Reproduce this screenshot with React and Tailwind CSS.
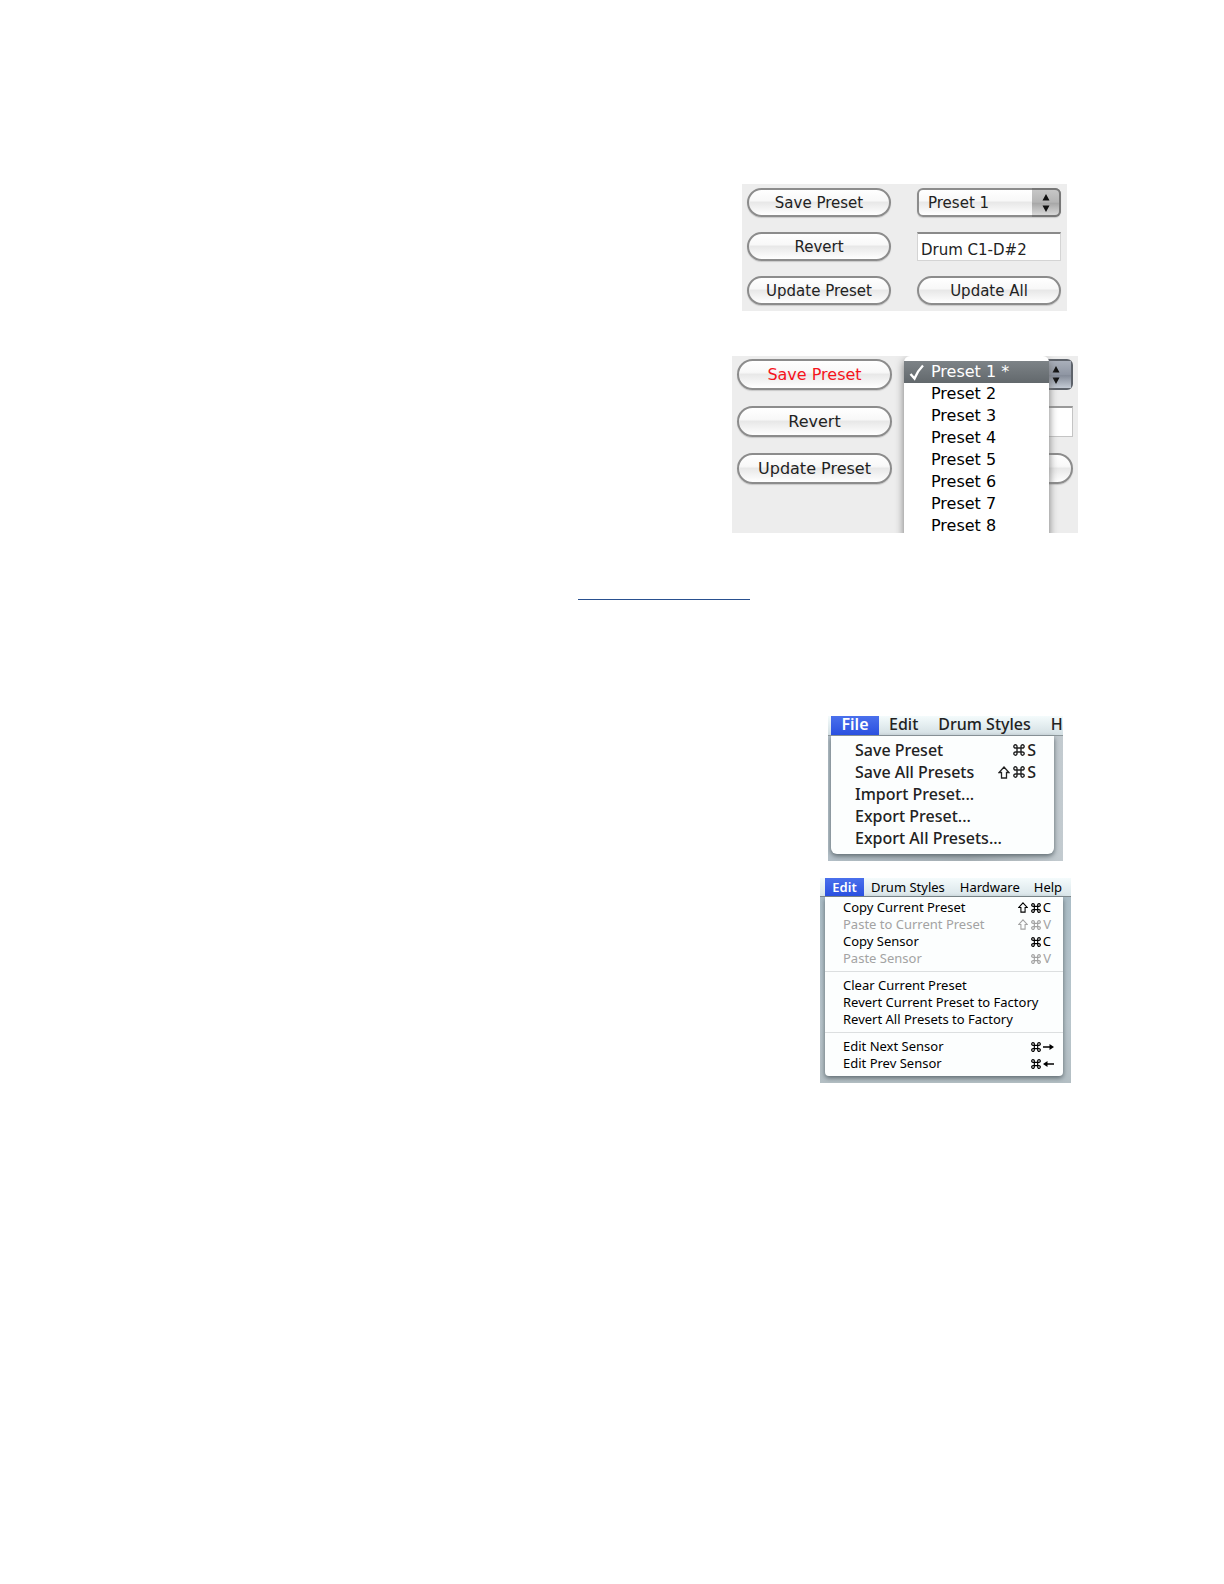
import { useState } from "react";

const MAC_SANS = "font-['Noto_Sans','Open_Sans',sans-serif]";

function PillButton({ children, className = "", label }) {
  return (
    <button
      type="button"
      aria-label={label}
      className={`w-full rounded-full border-2 border-[#8c8c8c] bg-[linear-gradient(to_bottom,#ffffff_0%,#f8f8f8_42%,#e8e8e8_50%,#ffffff_100%)] pt-px text-center whitespace-nowrap shadow-[0_1px_1px_#c8c8c8] ${className}`}
    >
      {children}
    </button>
  );
}

function Stepper({ className }) {
  return (
    <span
      aria-hidden="true"
      className={`pointer-events-none absolute flex items-center justify-center ${className}`}
    >
      <svg width="8" height="18" viewBox="0 0 8 18" fill="#111">
        <path d="M4 0 7.5 6.5h-7zM4 18 .5 11.5h7z" />
      </svg>
    </span>
  );
}

function PresetPanel() {
  const [name, setName] = useState("Drum C1-D#2");
  return (
    <section
      aria-label="Preset controls"
      className="mr-[157px] grid grid-cols-[144px_144px] gap-x-[26px] gap-y-[15px] bg-[#ededed] pt-1 pr-[6px] pb-[6px] pl-[5px] text-[15px] text-[#222]"
    >
      <PillButton className="h-[29px]">Save Preset</PillButton>
      <div className="relative h-[29px]">
        <select
          aria-label="Preset"
          className="h-full w-full appearance-none rounded-md border-2 border-[#8c8c8c] bg-[linear-gradient(to_bottom,#ffffff_0%,#f8f8f8_42%,#e8e8e8_50%,#ffffff_100%)] pt-px pl-[9px] shadow-[0_1px_1px_#c8c8c8]"
        >
          <option>Preset 1</option>
        </select>
        <Stepper className="top-0 right-0 bottom-0 w-[29px] rounded-r-md border-2 border-l-0 border-[#777] bg-[linear-gradient(to_bottom,#c6c6c6_0%,#b4b4b4_48%,#a8a8a8_54%,#d8d8d8_100%)]" />
      </div>
      <PillButton className="h-[29px]">Revert</PillButton>
      <input
        aria-label="Preset name"
        value={name}
        onChange={(e) => setName(e.target.value)}
        className="h-[29px] w-full border border-t-2 border-[#d4d4d4] border-t-[#8a8a8a] bg-white px-[3px] pt-[5px]"
      />
      <PillButton className="h-[29px]">Update Preset</PillButton>
      <PillButton className="h-[29px]">Update All</PillButton>
    </section>
  );
}

function OpenPresetPanel() {
  return (
    <section
      aria-label="Preset list"
      className="relative mt-[45px] mr-[146px] grid h-[177px] grid-cols-[155px_155px] content-start gap-x-[26px] gap-y-4 overflow-hidden bg-[#ededed] px-[5px] pt-[3px] text-[16px] text-[#222]"
    >
      <PillButton className="h-[31px] text-[#f5141c]">Save Preset</PillButton>
      <div className="relative h-[31px] rounded-md border-2 border-[#5d626a]">
        <Stepper className="top-0 right-0 bottom-0 w-[30px] bg-[linear-gradient(to_bottom,#a9afba_0%,#8f96a3_50%,#858c99_54%,#c3cad4_100%)]" />
      </div>
      <PillButton className="h-[31px]">Revert</PillButton>
      <input
        aria-label="Preset name"
        className="h-[31px] w-full border border-t-2 border-[#c4c4c4] border-t-[#999] bg-white"
      />
      <PillButton className="h-[31px]">Update Preset</PillButton>
      <PillButton className="h-[31px]" label="Update All" />
      <ul
        role="listbox"
        aria-label="Presets"
        className="absolute top-0 left-[172px] w-[145px] rounded-t-md bg-white pt-[5px] leading-4 text-black shadow-[0_4px_9px_#777]"
      >
        {[1, 2, 3, 4, 5, 6, 7, 8].map((n) => (
          <li
            key={n}
            role="option"
            aria-selected={n === 1}
            className={
              n === 1
                ? "flex h-[22px] items-center bg-[linear-gradient(to_bottom,#7d8387,#62686c)] text-white"
                : "flex h-[22px] items-center"
            }
          >
            <span className="w-[27px] pl-[5px]">
              {n === 1 && (
                <svg width="16" height="17" viewBox="0 0 16 17" fill="none" stroke="#fff" strokeWidth="2.4" aria-hidden="true">
                  <path d="M1.5 10 5.5 14.5Q8.5 7 14 1.5" />
                </svg>
              )}
            </span>
            {n === 1 ? "Preset 1 *" : `Preset ${n}`}
          </li>
        ))}
      </ul>
    </section>
  );
}

function Keys({ shift, glyph, arrow, small }) {
  const size = small ? 10 : 12;
  return (
    <span className="flex items-center gap-[2px]">
      {shift && (
        <svg width={size} height={size + 1} viewBox="0 0 12 13" fill="none" stroke="currentColor" strokeWidth="1.3" className="mr-px" aria-label="Shift">
          <path d="M6 1 11 6.5H8.5V12h-5V6.5H1z" />
        </svg>
      )}
      <svg width={size} height={size} viewBox="0 0 12 12" fill="none" stroke="currentColor" strokeWidth="1.4" aria-label="Command">
        <path d="M4 4h4v4H4zM4 4H2.6A1.6 1.6 0 1 1 4 2.4zM8 4V2.4A1.6 1.6 0 1 1 9.4 4zM8 8h1.4A1.6 1.6 0 1 1 8 9.6zM4 8v1.6A1.6 1.6 0 1 1 2.6 8z" />
      </svg>
      {glyph && <span>{glyph}</span>}
      {arrow && (
        <svg
          width="11"
          height="8"
          viewBox="0 0 11 8"
          fill="currentColor"
          className={arrow === "left" ? "-mr-[3px] rotate-180" : "-mr-[3px]"}
          aria-label={arrow}
        >
          <path d="M0 3.2h6.5V1L11 4 6.5 7V4.8H0z" />
        </svg>
      )}
    </span>
  );
}

function FileMenu() {
  const items = [
    ["Save Preset", { glyph: "S" }],
    ["Save All Presets", { glyph: "S", shift: true }],
    ["Import Preset..."],
    ["Export Preset..."],
    ["Export All Presets..."],
  ];
  return (
    <section
      aria-label="File menu"
      className={`mt-[116px] mr-[161px] w-[235px] overflow-hidden bg-[linear-gradient(to_right,#b3bfc7,#a7b0b5_60%,#c3cbd0)] pb-[7px] text-[16px] font-medium text-[#222] ${MAC_SANS}`}
    >
      <nav className="flex h-5 items-start border-b border-[#8e989c] bg-[linear-gradient(to_bottom,#f4fbfc,#d3dfe3)] pl-[3px] leading-4 whitespace-nowrap">
        <button type="button" className="h-[19px] w-12 bg-[linear-gradient(to_bottom,#4a70ec,#2a50e0)] pb-[3px] font-semibold text-white">File</button>
        <button type="button" className="ml-[10px]">Edit</button>
        <button type="button" className="ml-[20px]">Drum Styles</button>
        <button type="button" className="ml-[20px]">H</button>
      </nav>
      <div role="menu" className="mr-[9px] ml-[3px] rounded-b-md bg-[#fcfefe] pt-[3px] pb-[5px] shadow-[0_2px_5px_#5c686e]">
        {items.map(([text, keys]) => (
          <button key={text} role="menuitem" type="button" className="flex h-[22px] w-full items-center justify-between pr-[18px] pl-6">
            <span>{text}</span>
            {keys && <Keys {...keys} />}
          </button>
        ))}
      </div>
    </section>
  );
}

function EditMenu() {
  const groups = [
    [
      ["Copy Current Preset", { glyph: "C", shift: true }],
      ["Paste to Current Preset", { glyph: "V", shift: true }, true],
      ["Copy Sensor", { glyph: "C" }],
      ["Paste Sensor", { glyph: "V" }, true],
    ],
    [["Clear Current Preset"], ["Revert Current Preset to Factory"], ["Revert All Presets to Factory"]],
    [
      ["Edit Next Sensor", { arrow: "right" }],
      ["Edit Prev Sensor", { arrow: "left" }],
    ],
  ];
  return (
    <section
      aria-label="Edit menu"
      className={`mt-[17px] mr-[153px] w-[251px] overflow-hidden bg-[linear-gradient(to_bottom,#a9bcc6,#b9c6cc_70%,#b4bfc4)] pb-[7px] text-[13px] text-black ${MAC_SANS}`}
    >
      <nav className="flex h-[19px] items-center border-b border-[#7e888c] bg-[linear-gradient(to_bottom,#f4fbfc,#d9e5e9)] pl-[5px] leading-4 whitespace-nowrap">
        <button type="button" className="h-[18px] w-[39px] bg-[linear-gradient(to_bottom,#4a70ec,#2a50e0)] font-semibold text-white">Edit</button>
        <button type="button" className="ml-[7px]">Drum Styles</button>
        <button type="button" className="ml-[15px]">Hardware</button>
        <button type="button" className="ml-[14px]">Help</button>
      </nav>
      <div role="menu" className="mr-2 ml-[5px] divide-y divide-[#dcdfe0] rounded-b-sm bg-[#fcfefe] pt-[2px] shadow-[0_2px_5px_#5c686e]">
        {groups.map((group, g) => (
          <div key={g} className={g === 0 ? "pb-1" : "pt-[5px] pb-1"}>
            {group.map(([text, keys, off]) => (
              <button
                key={text}
                role="menuitem"
                type="button"
                disabled={off}
                className="flex h-[17px] w-full items-center justify-between pr-3 pl-[18px] whitespace-nowrap disabled:text-[#a3a3a3]"
              >
                <span>{text}</span>
                {keys && <Keys {...keys} small />}
              </button>
            ))}
          </div>
        ))}
      </div>
    </section>
  );
}

export default function App() {
  return (
    <main className="flex min-h-screen flex-col items-end bg-white pt-[184px] font-['DejaVu_Sans',sans-serif]">
      <PresetPanel />
      <OpenPresetPanel />
      <a href="#preset" aria-label="Preset details" className="mt-[50px] mr-[474px] h-[17px] w-[172px] border-b border-[#29508f]" />
      <FileMenu />
      <EditMenu />
    </main>
  );
}
